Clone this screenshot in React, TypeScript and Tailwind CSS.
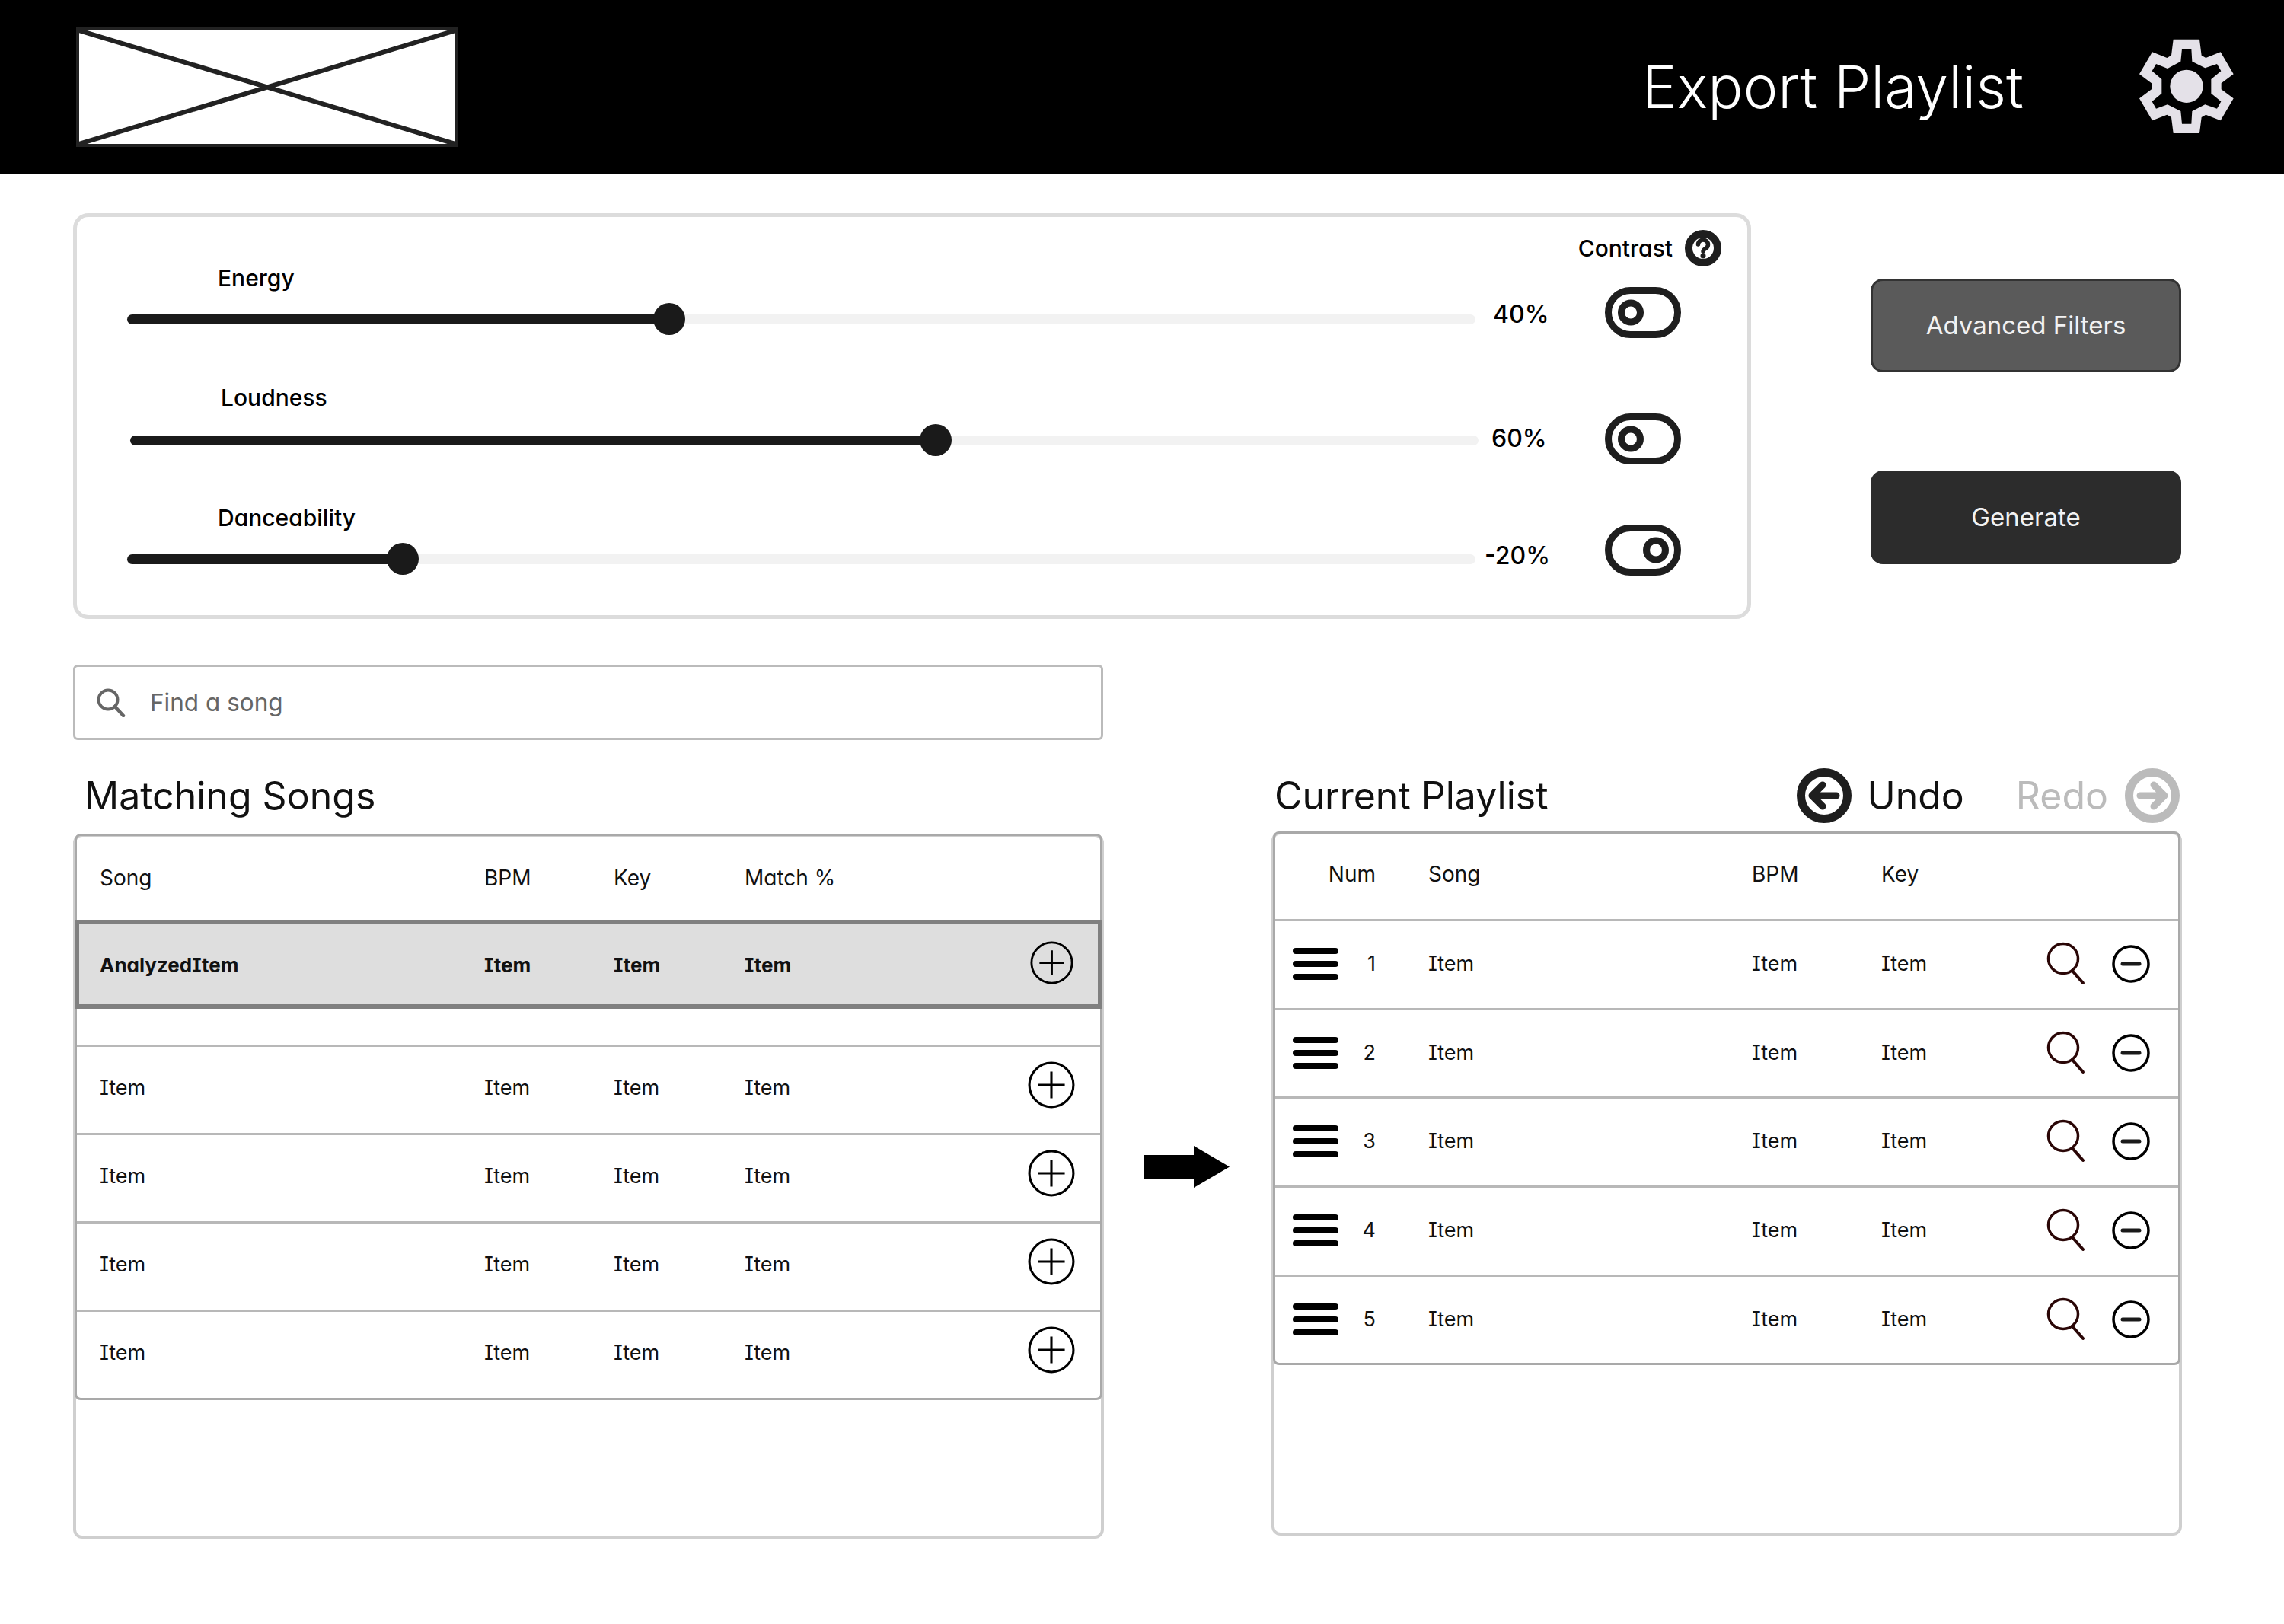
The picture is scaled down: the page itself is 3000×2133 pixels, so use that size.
import React from 'react';

const Gear = () => (
  <svg width="180" height="170" viewBox="0 0 540 510" className="shrink-0">
    <path
      fillRule="evenodd"
      fill="#e4e1e8"
      d="M224 65L327 65L335 128L352 138L410 115L461 202L413 238L413 262L461 298L410 385L352 362L335 372L327 435L224 435L216 372L199 362L141 385L90 298L138 262L138 238L90 202L141 115L199 138L216 128Z
      M258 102L253 152L201 180L156 162L140 190L178 222L178 278L140 310L156 338L201 322L253 348L258 398L295 398L298 348L349 322L396 338L412 310L373 278L373 222L412 190L396 162L349 178L298 152L295 102Z"
    />
    <circle cx="276" cy="250" r="65" fill="#e4e1e8" />
  </svg>
);

const Logo = () => (
  <div className="h-[157px] w-[502px] shrink-0 border-[4px] border-[#222] bg-white">
    <svg width="494" height="149" viewBox="0 0 494 149" className="block">
      <path d="M0 0L494 149M494 0L0 149" stroke="#222" strokeWidth="6" />
    </svg>
  </div>
);

const Toggle: React.FC<{ on?: boolean }> = ({ on }) => (
  <svg width="100" height="67" viewBox="0 0 100 67" className="shrink-0">
    <rect x="4.5" y="4.5" width="91" height="58" rx="29" fill="none" stroke="#1e1e1e" strokeWidth="9" />
    <circle cx={on ? 67 : 34} cy="33.5" r="12.5" fill="none" stroke="#1e1e1e" strokeWidth="9" />
  </svg>
);

const HelpIcon = () => (
  <svg width="48" height="48" viewBox="0 0 48 48" className="shrink-0">
    <circle cx="24" cy="24" r="19" fill="none" stroke="#1e1e1e" strokeWidth="10" />
    <path d="M17.5 19a6.5 6 0 1 1 10 5.2c-2 1.2-3.5 2-3.5 4" fill="none" stroke="#1e1e1e" strokeWidth="5.5" strokeLinecap="round" />
    <circle cx="24" cy="34" r="3.5" fill="#1e1e1e" />
  </svg>
);

const Slider: React.FC<{ pos: number }> = ({ pos }) => (
  <div className="relative flex h-[42px] w-[1771px] items-center">
    <div className="h-[13px] w-full rounded-full bg-[#f2f2f2]" />
    <div className="absolute left-0 h-[13px] rounded-full bg-[#1a1a1a]" style={{ width: pos }} />
    <div className="absolute h-[42px] w-[42px] rounded-full bg-[#1a1a1a]" style={{ left: pos - 21 }} />
  </div>
);

const sliderFont = "text-[30px] leading-[36px] font-medium text-black";
const valueFont = "text-[32px] leading-[36px] font-medium text-black";

const ArrowCircle: React.FC<{ dir: 'left' | 'right'; color: string }> = ({ dir, color }) => (
  <svg width="72" height="72" viewBox="0 0 72 72" className="shrink-0">
    <circle cx="36" cy="36" r="30.5" fill="none" stroke={color} strokeWidth="11" />
    {dir === 'left' ? (
      <path d="M52 36H22M34 22L20 36L34 50" fill="none" stroke={color} strokeWidth="9" strokeLinecap="round" strokeLinejoin="round" />
    ) : (
      <path d="M20 36H50M38 22L52 36L38 50" fill="none" stroke={color} strokeWidth="9" strokeLinecap="round" strokeLinejoin="round" />
    )}
  </svg>
);

const PlusCircle: React.FC<{ size: number }> = ({ size }) => (
  <svg width={size} height={size} viewBox="0 0 60 60" className="shrink-0">
    <circle cx="30" cy="30" r="28" fill="none" stroke="#000" strokeWidth="3" />
    <path d="M13 30H47M30 13V47" stroke="#000" strokeWidth="3" />
  </svg>
);

const MinusCircle = () => (
  <svg width="50" height="50" viewBox="0 0 50 50" className="ml-[34px] shrink-0">
    <circle cx="25" cy="25" r="23" fill="none" stroke="#000" strokeWidth="3.5" />
    <path d="M14 25H36" stroke="#1a1a1a" strokeWidth="5" strokeLinecap="round" />
  </svg>
);

const RowSearch = () => (
  <svg width="52" height="58" viewBox="0 0 52 58" className="shrink-0">
    <circle cx="22" cy="22" r="19.5" fill="none" stroke="#2a0606" strokeWidth="3.5" />
    <path d="M34 38L48 54" stroke="#2a0606" strokeWidth="4" strokeLinecap="round" />
  </svg>
);

const Burger = () => (
  <div className="flex w-[60px] shrink-0 flex-col gap-[9px]">
    <div className="h-[8px] rounded-full bg-black" />
    <div className="h-[8px] rounded-full bg-black" />
    <div className="h-[8px] rounded-full bg-black" />
  </div>
);

const cell = "text-[27px] leading-[34px] text-[#111]";
const headCell = "text-[28px] leading-[34px] text-[#111]";
const boldCell = "text-[26px] leading-[34px] font-bold text-[#111]";

const SongCols: React.FC<{ vals: string[]; font: string }> = ({ vals, font }) => (
  <>
    <span className={`w-[505px] shrink-0 ${font}`}>{vals[0]}</span>
    <span className={`w-[170px] shrink-0 ${font}`}>{vals[1]}</span>
    <span className={`w-[172px] shrink-0 ${font}`}>{vals[2]}</span>
    <span className={`w-[150px] shrink-0 whitespace-nowrap ${font}`}>{vals[3]}</span>
  </>
);

const MatchingTable = () => (
  <div className="h-[926px] rounded-[12px] border-[4px] border-[#cfcfcf] bg-white">
    <div className="-mx-[2px] -mt-[4px] rounded-t-[8px] rounded-b-[8px] border-[3px] border-[#a9a9a9]">
      <div className="flex h-[110px] items-center pl-[30px]">
        <SongCols vals={['Song', 'BPM', 'Key', 'Match %']} font={headCell} />
      </div>
      <div className="-mx-[3px] flex h-[117px] items-center border-[6px] border-[#808080] bg-[#dedede] pl-[27px] pt-[3px]">
        <SongCols vals={['AnalyzedItem', 'Item', 'Item', 'Item']} font={boldCell} />
        <div className="mb-[8px] ml-[225px]">
          <PlusCircle size={57} />
        </div>
      </div>
      <div className="h-[47px]" />
      {[0, 1, 2, 3].map((i) => (
        <div key={i} className="flex h-[116px] items-center border-t-[3px] border-[#b8b8b8] pb-[6px] pl-[30px]">
          <SongCols vals={['Item', 'Item', 'Item', 'Item']} font={cell} />
          <div className="mb-[8px] ml-[222px]">
            <PlusCircle size={62} />
          </div>
        </div>
      ))}
    </div>
  </div>
);

const PlaylistTable = () => (
  <div className="h-[925px] rounded-[12px] border-[4px] border-[#cfcfcf] bg-white">
    <div className="-mx-[2px] -mt-[4px] rounded-t-[8px] rounded-b-[8px] border-[3px] border-[#a9a9a9]">
      <div className="flex h-[112px] items-center pb-[6px] pl-[23px]">
        <span className={`ml-[60px] flex w-[49px] shrink-0 justify-end whitespace-nowrap ${headCell}`}>Num</span>
        <span className={`ml-[69px] w-[425px] shrink-0 ${headCell}`}>Song</span>
        <span className={`w-[170px] shrink-0 ${headCell}`}>BPM</span>
        <span className={`w-[100px] shrink-0 ${headCell}`}>Key</span>
      </div>
      {[1, 2, 3, 4, 5].map((n) => (
        <div key={n} className="flex h-[116.7px] items-center border-t-[3px] border-[#b8b8b8] pb-[2px] pl-[23px]">
          <Burger />
          <span className={`w-[49px] shrink-0 text-right ${cell}`}>{n}</span>
          <span className={`ml-[69px] w-[425px] shrink-0 ${cell}`}>Item</span>
          <span className={`w-[170px] shrink-0 ${cell}`}>Item</span>
          <span className={`w-[217px] shrink-0 ${cell}`}>Item</span>
          <RowSearch />
          <MinusCircle />
        </div>
      ))}
    </div>
  </div>
);

export default function App() {
  return (
    <div className="h-[2133px] w-[3000px] bg-white font-[Inter,sans-serif] [font-feature-settings:'cv08','cv11']">
      <header className="flex h-[229px] items-center bg-black pl-[100px] pr-[40px]">
        <Logo />
        <h1 className="ml-auto text-[77px] leading-none font-light text-white [font-feature-settings:normal]">Export Playlist</h1>
        <div className="ml-[122px]">
          <Gear />
        </div>
      </header>

      <main className="px-[96px]">
        <div className="mt-[51px] flex items-start">
          <section className="h-[533px] w-[2204px] rounded-[20px] border-[5px] border-[#dcdcdc] pt-[17px]">
            <div className="-mb-[10px] flex h-[48px] items-center justify-end pr-[34px]">
              <span className={`${sliderFont} mr-[2px]`}>Contrast</span>
              <span className="ml-[14px]">
                <HelpIcon />
              </span>
            </div>

            <div className="flex h-[157px]">
              <div className="ml-[66px]">
                <div className={`ml-[119px] mt-[7px] ${sliderFont}`}>Energy</div>
                <div className="mt-[15px]">
                  <Slider pos={712} />
                </div>
              </div>
              <div className={`ml-[23px] mt-[55px] w-[147px] shrink-0 ${valueFont}`}>40%</div>
              <div className="mt-[37px]">
                <Toggle />
              </div>
            </div>

            <div className="flex h-[158px]">
              <div className="ml-[70px]">
                <div className={`ml-[119px] mt-[7px] ${sliderFont}`}>Loudness</div>
                <div className="mt-[17px]">
                  <Slider pos={1058} />
                </div>
              </div>
              <div className={`ml-[17px] mt-[61px] w-[149px] shrink-0 ${valueFont}`}>60%</div>
              <div className="mt-[46px]">
                <Toggle />
              </div>
            </div>

            <div className="flex">
              <div className="ml-[66px]">
                <div className={`ml-[119px] mt-[7px] ${sliderFont}`}>Danceability</div>
                <div className="mt-[15px]">
                  <Slider pos={362} />
                </div>
              </div>
              <div className={`ml-[12px] mt-[57px] w-[158px] shrink-0 ${valueFont}`}>-20%</div>
              <div className="mt-[34px]">
                <Toggle on />
              </div>
            </div>
          </section>

          <div className="ml-[157px] mt-[86px] flex w-[408px] flex-col gap-[129px] [font-feature-settings:normal]">
            <button className="flex h-[123px] items-center justify-center rounded-[16px] border-[3px] border-[#333] bg-[#5a5a5a] text-[33px] text-[#f2f2f2]">
              Advanced Filters
            </button>
            <button className="flex h-[123px] items-center justify-center rounded-[16px] bg-[#2c2c2c] text-[33px] text-[#f2f2f2]">
              Generate
            </button>
          </div>
        </div>

        <div className="mt-[60px] flex h-[99px] w-[1353px] items-center rounded-[6px] border-[3px] border-[#bbb] pl-[28px]">
          <svg width="38" height="38" viewBox="0 0 38 38" className="shrink-0">
            <circle cx="15" cy="15" r="12.5" fill="none" stroke="#666" strokeWidth="4" />
            <path d="M24 24L35 36" stroke="#666" strokeWidth="4.5" strokeLinecap="round" />
          </svg>
          <span className="ml-[32px] text-[31.5px] leading-none text-[#666]">Find a song</span>
        </div>

        <div className="mt-[43px] flex items-start">
          <div className="w-[1354px] shrink-0">
            <h2 className="mb-[20px] pl-[15px] text-[50px] leading-[60px] font-normal text-[#111] [font-feature-settings:normal]">Matching Songs</h2>
            <MatchingTable />
          </div>

          <svg width="112" height="55" viewBox="0 0 112 55" className="ml-[53px] mt-[490px] shrink-0">
            <path d="M0 12H65V0L112 27.5L65 55V43H0Z" fill="#000" />
          </svg>

          <div className="ml-[55px] w-[1196px] shrink-0">
            <div className="mb-[17px] flex h-[60px] items-center [font-feature-settings:normal]">
              <h2 className="pl-[4px] text-[50px] leading-[60px] font-normal text-[#111]">Current Playlist</h2>
              <div className="ml-auto flex items-center">
                <ArrowCircle dir="left" color="#1e1e1e" />
                <span className="ml-[20px] text-[50px] leading-[60px] text-[#111]">Undo</span>
                <span className="ml-[68px] text-[50px] leading-[60px] text-[#bbb]">Redo</span>
                <span className="ml-[22px] mr-[3px]">
                  <ArrowCircle dir="right" color="#bbb" />
                </span>
              </div>
            </div>
            <PlaylistTable />
          </div>
        </div>
      </main>
    </div>
  );
}
